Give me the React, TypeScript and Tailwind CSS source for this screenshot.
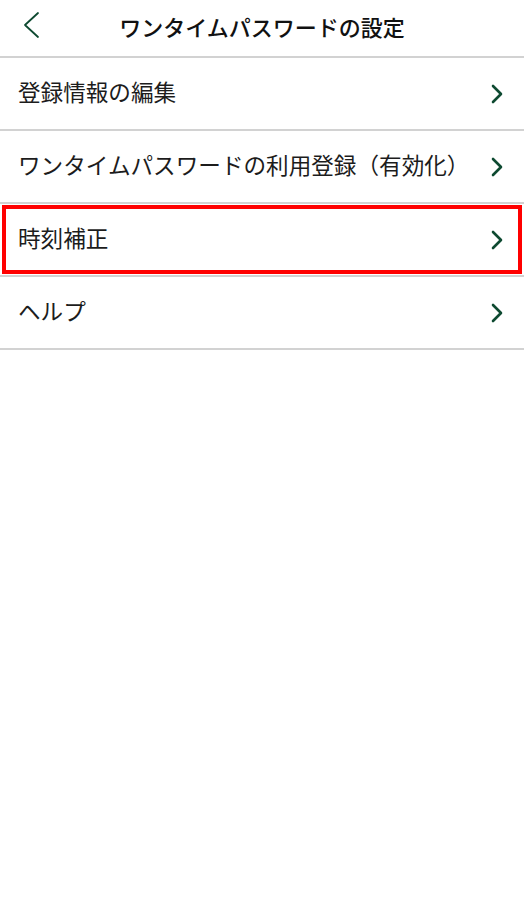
import { ReactNode } from 'react'

const ITEMS = [
  { label: '登録情報の編集' },
  { label: 'ワンタイムパスワードの利用登録（有効化）' },
  { label: '時刻補正', marked: true },
  { label: 'ヘルプ' },
]

function Chevron() {
  return (
    <svg width="12" height="20" viewBox="0 0 12 20" fill="none" className="shrink-0">
      <path d="M2 2 L10 10 L2 18" stroke="#0e4a31" strokeWidth="2.6" strokeLinecap="round" strokeLinejoin="round" />
    </svg>
  )
}

function Row({ children, marked }: { children: ReactNode; marked?: boolean }) {
  return (
    <div className="relative flex h-[73px] items-center justify-between border-b-2 border-[#d2d2d2] pl-[18px] pr-[21px]">
      <span className="mb-[2px] text-[22.6px] leading-none text-[#1c1c1c]">{children}</span>
      <Chevron />
      {/* annotation frame */}
      {marked && (
        <div className="pointer-events-none absolute left-[2px] right-[2px] top-[1px] bottom-[1px] border-[4px] border-[#ff0000]" />
      )}
    </div>
  )
}

export default function App() {
  return (
    <div className="min-h-[900px] w-full bg-white font-['Noto_Sans_CJK_JP','Noto_Sans',sans-serif]">
      {/* ── Header ─── */}
      <div className="relative flex h-[58px] items-center justify-center border-b-2 border-[#d2d2d2]">
        <button className="absolute left-[20px] top-[11px] p-0">
          <svg width="22" height="28" viewBox="0 0 22 28" fill="none">
            <path d="M18 2 L5 14 L18 26" stroke="#0e4a31" strokeWidth="1.8" strokeLinecap="round" strokeLinejoin="round" />
          </svg>
        </button>
        <h1 className="mb-[4px] text-[22px] font-medium text-[#111]">ワンタイムパスワードの設定</h1>
      </div>

      {ITEMS.map((item) => (
        <Row key={item.label} marked={item.marked}>
          {item.label}
        </Row>
      ))}
    </div>
  )
}
